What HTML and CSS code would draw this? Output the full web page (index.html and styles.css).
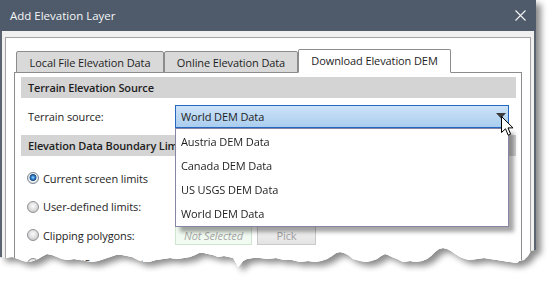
FILE: index.html
```html
<!DOCTYPE html>
<html>
<head>
<meta charset="utf-8">
<title>Add Elevation Layer</title>
<link rel="stylesheet" href="styles.css">
</head>
<body>
<div class="stage">
  <div class="shadow">
    <div class="window">
      <div class="titlebar">
        <span class="title">Add Elevation Layer</span>
        <svg class="close" width="11" height="11" viewBox="0 0 11 11"><path d="M0.5 0.5 L10.5 10.5 M10.5 0.5 L0.5 10.5" stroke="#f2f4f6" stroke-width="1.1" fill="none"/></svg>
      </div>
      <div class="client">
        <div class="frame">
          <div class="tabs">
            <div class="tab tab-local">Local File Elevation Data</div>
            <div class="tab tab-online">Online Elevation Data</div>
            <div class="tab tab-download active">Download Elevation DEM</div>
          </div>
          <div class="panel">
            <div class="section"><span class="section-text">Terrain Elevation Source</span></div>
            <div class="source-row">
              <span class="label">Terrain source:</span>
              <div class="combo-wrap">
                <div class="combo">
                  <span>World DEM Data</span>
                  <svg class="arrow" width="10" height="6" viewBox="0 0 10 6"><path d="M0 0 H10 L5 5.5 Z" fill="#3c3c3c"/></svg>
                </div>
                <ul class="dropdown">
                  <li>Austria DEM Data</li>
                  <li>Canada DEM Data</li>
                  <li>US USGS DEM Data</li>
                  <li>World DEM Data</li>
                </ul>
              </div>
            </div>
            <div class="section"><span class="section-text">Elevation Data Boundary Limits</span></div>
            <div class="radios">
              <div class="radio-row"><span class="radio checked"></span><span class="rlabel">Current screen limits</span></div>
              <div class="radio-row"><span class="radio"></span><span class="rlabel">User-defined limits:</span></div>
              <div class="radio-row"><span class="radio"></span><span class="rlabel">Clipping polygons:</span><span class="notsel">Not Selected</span><span class="pick">Pick</span></div>
              <div class="radio-row"><span class="radio"></span><span class="rlabel">USGS GIS model data</span></div>
            </div>
          </div>
        </div>
      </div>
    </div>
  </div>
  <svg class="cursor" width="13" height="21" viewBox="0 0 13 21"><path d="M0.5 0.5 L0.5 16.5 L4.5 12.8 L7.2 19.2 L9.6 18.2 L7 11.9 L12 11.9 Z" fill="#fff" stroke="#000" stroke-width="1" stroke-linejoin="miter"/></svg>
</div>
</body>
</html>
```

FILE: styles.css
```css
* { box-sizing: border-box; }
html, body { margin: 0; padding: 0; background: #fff; overflow: hidden; }
body {
  width: 551px; height: 281px;
  font-family: "Open Sans", "Noto Sans", sans-serif;
  font-size: 11px;
  letter-spacing: -0.1px;
  color: #1e1e1e;
}
.stage { position: relative; width: 551px; height: 281px; }
.shadow { width: 536px; filter: drop-shadow(5px 4px 3px rgba(0,0,0,0.45)); }
.window {
  width: 536px; height: 281px;
  display: flex; flex-direction: column;
  background: #f0f0f0;
  clip-path: polygon(0 0, 536px 0, 536px 250px, 531px 251px, 528px 256px, 524px 260px, 519px 261px, 517px 263px, 510px 262px, 503px 261px, 497px 260px, 490px 259px, 484px 258px, 477px 259px, 470px 260px, 465px 259px, 460px 257px, 455px 254px, 451px 251px, 447px 249px, 443px 248px, 439px 249px, 435px 252px, 431px 256px, 427px 259px, 422px 261px, 416px 262px, 410px 261px, 403px 262px, 397px 259px, 392px 257px, 388px 255px, 385px 254px, 381px 256px, 377px 259px, 371px 261px, 366px 262px, 360px 261px, 353px 259px, 348px 255px, 344px 253px, 340px 252px, 336px 253px, 332px 256px, 327px 259px, 321px 261px, 315px 262px, 308px 261px, 300px 262px, 292px 260px, 284px 260px, 276px 258px, 268px 259px, 260px 258px, 253px 258px, 247px 259px, 243px 261px, 240px 265px, 238px 267px, 236px 263px, 233px 258px, 229px 257px, 224px 256px, 218px 257px, 213px 255px, 208px 254px, 204px 253px, 199px 253px, 195px 255px, 190px 257px, 184px 258px, 177px 259px, 170px 258px, 163px 259px, 156px 260px, 149px 262px, 143px 262px, 138px 260px, 132px 257px, 127px 256px, 122px 255px, 116px 255px, 110px 257px, 104px 259px, 98px 261px, 92px 262px, 86px 261px, 80px 260px, 74px 259px, 68px 260px, 62px 259px, 57px 257px, 52px 255px, 47px 254px, 43px 256px, 38px 259px, 33px 261px, 28px 262px, 23px 261px, 18px 259px, 12px 257px, 6px 258px, 0 257px);
}
.titlebar {
  height: 31px; flex: none;
  background: #4f5b6a;
  color: #f4f6f8;
  font-size: 11.5px;
  letter-spacing: 0;
  display: flex; align-items: center; justify-content: space-between;
  padding: 0 10px 0 10px;
}
.close { display: block; }
.client {
  flex: 1; display: flex; flex-direction: column;
  border-left: 2px solid #5a6471; border-right: 2px solid #5a6471;
  padding: 6px 3px 0 3px;
}
.frame {
  flex: 1; display: flex; flex-direction: column;
  background: #fff;
  border: 1px solid #a3a3a3;
  padding: 11px 8px 0 8px;
}
.tabs {
  display: flex; align-items: flex-end;
  height: 24px; margin: 0 0 -1px 2px;
  position: relative; z-index: 1;
}
.tab {
  height: 22px;
  display: flex; align-items: center; justify-content: center;
  background: #d9d9d9;
  border: 1px solid #8c8c8c;
  border-radius: 2px 2px 0 0;
  white-space: nowrap;
}
.tab-local { width: 148px; }
.tab-online { width: 134px; }
.tab-download { width: 153px; }
.tab.active {
  height: 24px; background: #fff;
  border-bottom-color: #fff;
  padding-bottom: 2px;
}
.panel {
  flex: 1;
  border: 1px solid #8c8c8c;
  background: #fff;
  padding: 4px 5px 0 6px;
}
.section {
  height: 21px;
  background: #d4d4d4;
  padding-left: 7px;
  display: flex; align-items: center;
  font-weight: 600;
  letter-spacing: -0.15px;
  white-space: nowrap;
}
.source-row {
  display: flex; align-items: center;
  height: 23px; margin: 7px 0 7px 0;
  padding-left: 7px;
}
.label { width: 147px; flex: none; }
.combo-wrap { position: relative; width: 334px; z-index: 2; }
.combo {
  height: 23px;
  border: 1px solid #2467bf;
  background: linear-gradient(#cde3f8, #aacdef);
  display: flex; align-items: center; justify-content: space-between;
  padding: 0 2px 0 5px;
}
.arrow { display: block; margin-top: -1px; }
.dropdown {
  position: absolute; left: 0; top: 23px;
  width: 334px; height: 99px;
  margin: 0; padding: 1px 0 0 0;
  list-style: none;
  background: #fff;
  border: 1px solid #8686a4;
  box-shadow: 5px 5px 4px rgba(0,0,0,0.35);
}
.dropdown li {
  height: 24px; line-height: 24px;
  padding-left: 5px;
}
.radios { margin-top: 8px; }
.radio-row {
  display: flex; align-items: center;
  height: 28.5px;
  padding-left: 6px;
}
.radio {
  width: 12px; height: 12px; flex: none;
  border-radius: 50%;
  border: 1px solid #8f9296;
  background: radial-gradient(circle at 50% 40%, #fbfbfb 0, #e6e6e6 3px, #c9c9c9 6px);
}
.radio.checked {
  border-color: #7c8794;
  background: radial-gradient(circle at 50% 45%, #b5e0ff 0, #3d91dd 1.4px, #1d60a9 2.6px, #2d4f78 3.2px, #f0f2f4 3.8px, #d2d7dd 6px);
}
.rlabel { margin-left: 4px; width: 132px; flex: none; white-space: nowrap; }
.notsel {
  width: 77px; height: 20px;
  border: 1px solid #cfe4cf;
  background: #f1fbf1;
  color: #a7a7a7;
  font-style: italic;
  display: flex; align-items: center; justify-content: center;
}
.pick {
  margin-left: 5px;
  width: 59px; height: 19px;
  border: 1px solid #c9c9c9;
  background: linear-gradient(#f5f5f5, #e3e3e3);
  color: #a2a2a2;
  display: flex; align-items: center; justify-content: center;
}
.cursor { position: absolute; left: 501px; top: 116px; z-index: 5; }
```
